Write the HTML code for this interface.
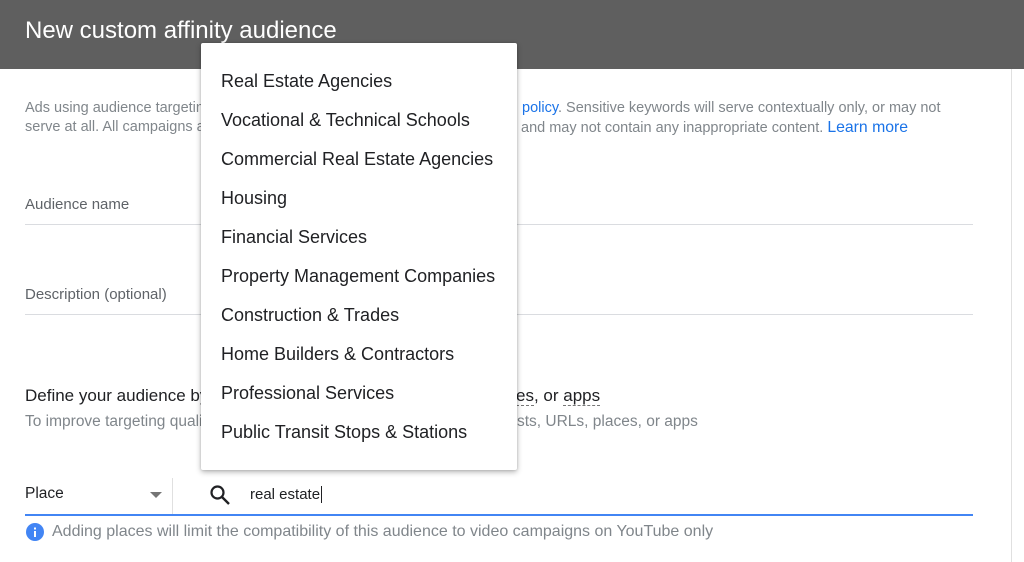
<!DOCTYPE html>
<html><head><meta charset="utf-8"><style>
body{margin:0;width:1024px;height:562px;overflow:hidden;background:#fff;font-family:"Liberation Sans",Arial,sans-serif;position:relative}
.a{position:absolute;white-space:nowrap}
.hdr{position:absolute;left:0;top:0;width:1024px;height:69px;background:#5f5f5f}
.g{color:#80868b;font-size:14.5px}
.bl{color:#1a73e8}
.line{position:absolute;left:25px;width:948px;height:1px;background:#dadce0}
.dd{position:absolute;left:201px;top:43px;width:316px;height:427px;background:#fff;box-shadow:0 2px 6px rgba(0,0,0,.3),0 0 2px rgba(0,0,0,.15);border-radius:2px}
.dd div{position:absolute;left:20px;font-size:18px;color:#202124;white-space:nowrap}
</style></head><body>
<div class="hdr"></div>
<div class="a" style="left:25px;top:17px;font-size:24px;color:#fff">New custom affinity audience</div>
<div style="position:absolute;left:1011px;top:69px;width:1px;height:493px;background:#e0e0e0"></div>
<div class="a g" style="left:25px;top:100px">Ads using audience targeting must comply</div>
<div class="a g" style="left:522px;top:100px"><span class="bl">policy</span>. Sensitive keywords will serve contextually only, or may not</div>
<div class="a g" style="left:25px;top:119px">serve at all. All campaigns are subject</div>
<div class="a g" style="left:521px;top:119px">and may not contain any inappropriate content. <span class="bl" style="font-size:15.8px">Learn more</span></div>
<div class="a" style="left:25px;top:196px;font-size:15px;color:#5f6368">Audience name</div>
<div class="line" style="top:224px"></div>
<div class="a" style="left:25px;top:286px;font-size:15px;color:#5f6368">Description (optional)</div>
<div class="line" style="top:314px"></div>
<div class="a" style="left:25px;top:386px;font-size:17px;color:#202124">Define your audience by</div>
<div class="a" style="left:516px;top:386px;font-size:17px;color:#202124"><span style="border-bottom:1px dashed #777">es</span>, or <span style="border-bottom:1px dashed #777">apps</span></div>
<div class="a g" style="left:25px;top:413px;font-size:15.5px">To improve targeting quality</div>
<div class="a g" style="left:517px;top:413px;font-size:15.5px">sts, URLs, places, or apps</div>
<div class="a" style="left:25px;top:485px;font-size:15.5px;color:#202124">Place</div>
<div style="position:absolute;left:150px;top:492px;width:0;height:0;border-left:6px solid transparent;border-right:6px solid transparent;border-top:6px solid #757575"></div>
<div style="position:absolute;left:172px;top:478px;width:1px;height:36px;background:#e0e0e0"></div>
<svg style="position:absolute;left:208px;top:483px" width="24" height="24" viewBox="0 0 24 24"><circle cx="9.5" cy="9.5" r="6" fill="none" stroke="#202124" stroke-width="2.2"/><line x1="14" y1="14" x2="21" y2="21" stroke="#202124" stroke-width="2.4"/></svg>
<div class="a" style="left:250px;top:486px;font-size:15px;color:#202124">real estate<span style="border-left:1px solid #202124;margin-left:1px"></span></div>
<div style="position:absolute;left:25px;top:514px;width:948px;height:2px;background:#4285f4"></div>
<svg style="position:absolute;left:26px;top:523px" width="18" height="18" viewBox="0 0 18 18"><circle cx="9" cy="9" r="9" fill="#4285f4"/><rect x="8" y="8" width="2" height="6" fill="#fff"/><rect x="8" y="4.5" width="2" height="2" fill="#fff"/></svg>
<div class="a" style="left:52px;top:523px;font-size:16px;color:#80868b">Adding places will limit the compatibility of this audience to video campaigns on YouTube only</div>
<div class="dd">
<div style="top:28px">Real Estate Agencies</div>
<div style="top:67px">Vocational &amp; Technical Schools</div>
<div style="top:106px">Commercial Real Estate Agencies</div>
<div style="top:145px">Housing</div>
<div style="top:184px">Financial Services</div>
<div style="top:223px">Property Management Companies</div>
<div style="top:262px">Construction &amp; Trades</div>
<div style="top:301px">Home Builders &amp; Contractors</div>
<div style="top:340px">Professional Services</div>
<div style="top:379px">Public Transit Stops &amp; Stations</div>
</div>
</body></html>
